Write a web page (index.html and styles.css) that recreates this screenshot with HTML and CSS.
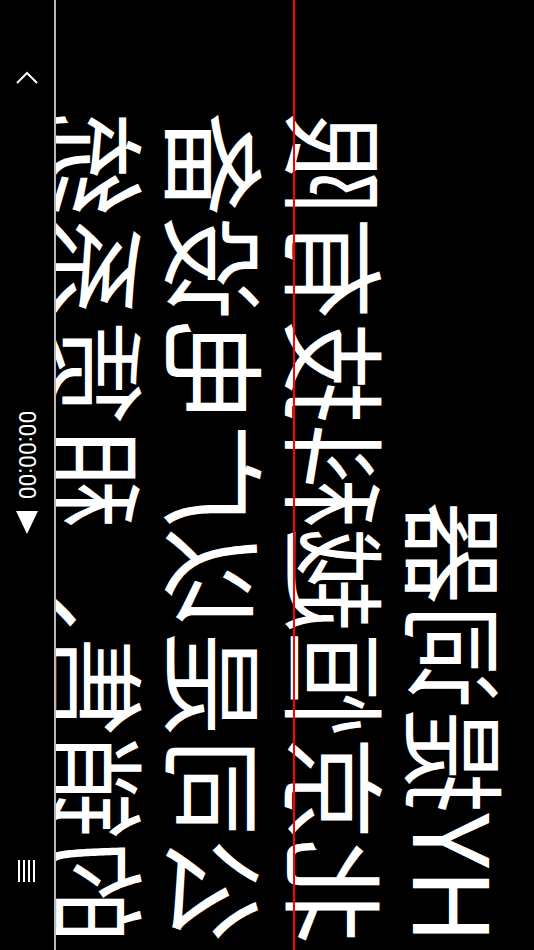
FILE: index.html
```html
<!DOCTYPE html>
<html lang="zh-CN">
<head>
<meta charset="utf-8">
<title>HY提词器</title>
<link rel="stylesheet" href="styles.css">
</head>
<body>
<div class="stage">
  <div class="prompter">
    <p class="script-line">HY提词器</p>
    <p class="script-line">北京恒越科技有限公司是以广电设备的销售、租赁系统</p>
    <div class="reading-line"></div>
  </div>
  <div class="controls">
    <div class="menu-icon"><span></span><span></span><span></span><span></span></div>
    <div class="timer"><span class="play-tri"></span><span class="time">00:00:00</span></div>
    <svg class="chevron" width="14" height="24" viewBox="0 0 14 24"><polyline points="2,2 12,12 2,22" fill="none" stroke="#fff" stroke-width="2"/></svg>
  </div>
</div>
</body>
</html>
```
FILE: styles.css
```css
html, body {
  margin: 0;
  padding: 0;
  background: #000;
  overflow: hidden;
}
body {
  width: 534px;
  height: 950px;
}
.stage {
  width: 950px;
  height: 534px;
  background: #000;
  transform-origin: 0 0;
  transform: matrix(0, -1, -1, 0, 534, 950);
  display: flex;
  flex-direction: column;
}
.prompter {
  position: relative;
  height: 478px;
  overflow: hidden;
  box-sizing: border-box;
  padding: 16px 60px 0 6px;
  color: #fff;
  font-family: "Noto Sans CJK SC", "Noto Sans", sans-serif;
  font-size: 104px;
  line-height: 120px;
}
.script-line {
  margin: 0;
}
.reading-line {
  position: absolute;
  left: 0;
  right: 0;
  top: 239px;
  height: 2px;
  background: #ff0000;
}
.controls {
  flex: 1;
  border-top: 2px solid #b8b8b8;
  display: flex;
  align-items: center;
  justify-content: space-between;
  padding: 0 71px 0 68px;
}
.menu-icon {
  display: flex;
  flex-direction: column;
  gap: 3px;
  width: 22px;
}
.menu-icon span {
  display: block;
  height: 2px;
  background: #fff;
}
.timer {
  display: flex;
  align-items: center;
  gap: 12px;
  color: #fff;
  font-family: Roboto, "Noto Sans", sans-serif;
  font-size: 23px;
}
.play-tri {
  width: 0;
  height: 0;
  border-top: 11px solid transparent;
  border-bottom: 11px solid transparent;
  border-right: 23px solid #fff;
}
.chevron {
  display: block;
}
```
